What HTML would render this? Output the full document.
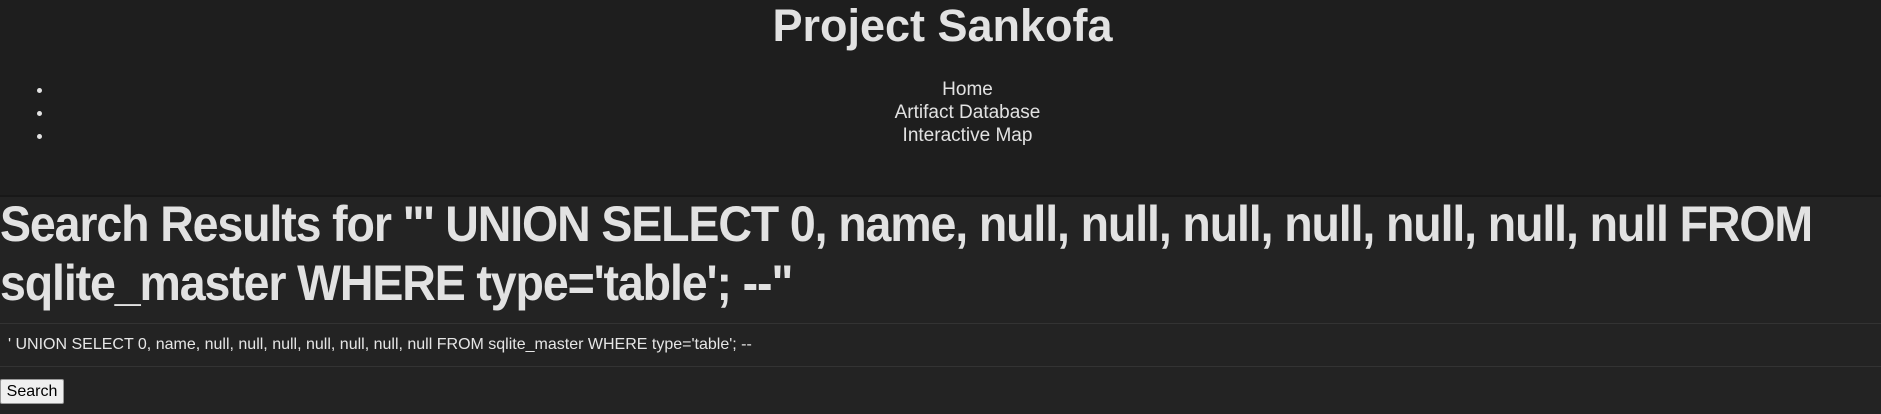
<!DOCTYPE html>
<html><head><meta charset="utf-8"><style>
html,body{margin:0;padding:0;}
body{width:1881px;height:414px;overflow:hidden;background:#232323;color:#e2e2e2;font-family:"Liberation Sans",sans-serif;}
header{background:#1e1e1e;height:195px;border-bottom:2px solid #181818;position:relative;}
.title{position:absolute;left:0;right:0;top:0;text-align:center;font-weight:bold;font-size:45px;line-height:52px;margin:0;letter-spacing:0px;padding-left:4px;}
ul{position:absolute;top:78px;left:0;right:0;margin:0;padding:0 0 0 54px;font-size:19px;line-height:23px;text-align:center;}
ul li{list-style:disc;}
h1{margin:0;position:absolute;top:195px;left:0;font-size:50px;line-height:59px;font-weight:bold;white-space:nowrap;letter-spacing:-1.2px;transform:scaleX(0.93);transform-origin:0 0;}
.row{position:absolute;left:0;right:0;top:323px;height:42px;border-top:1px solid #333;border-bottom:1px solid #333;font-size:16px;line-height:42px;padding-left:8px;color:#e6e6e6;}
button{position:absolute;left:0;top:379px;height:25px;width:64px;font-family:"Liberation Sans",sans-serif;font-size:16px;background:#efefef;color:#000;border:1px solid #999;border-radius:2px;padding:0;}
</style></head><body>
<header>
<div class="title">Project Sankofa</div>
<ul><li>Home</li><li>Artifact Database</li><li>Interactive Map</li></ul>
</header>
<h1>Search Results for "' UNION SELECT 0, name, null, null, null, null, null, null, null FROM<br>sqlite_master WHERE type='table'; --"</h1>
<div class="row">' UNION SELECT 0, name, null, null, null, null, null, null, null FROM sqlite_master WHERE type='table'; --</div>
<button>Search</button>
</body></html>
